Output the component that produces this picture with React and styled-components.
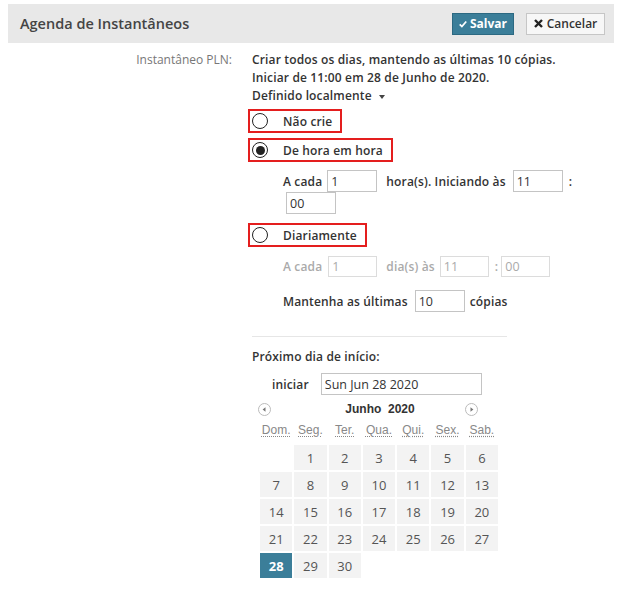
import React from 'react';
import styled, {createGlobalStyle, css} from 'styled-components';

const GlobalStyle = createGlobalStyle`
  body {
    margin: 0;
    background: #fff;
    font-family: "Open Sans", "Liberation Sans", sans-serif;
    color: #333;
  }
`;

const weeks = [
  [null, 1, 2, 3, 4, 5, 6],
  [7, 8, 9, 10, 11, 12, 13],
  [14, 15, 16, 17, 18, 19, 20],
  [21, 22, 23, 24, 25, 26, 27],
  [28, 29, 30, null, null, null, null],
];
const dayNames = ['Dom.', 'Seg.', 'Ter.', 'Qua.', 'Qui.', 'Sex.', 'Sab.'];

const Radio = ({checked, children}) => (
  <RadioBox>
    <RadioCircle $checked={checked} />
    <RadioText>{children}</RadioText>
  </RadioBox>
);

const App = () => {
  return (
    <Page>
      <GlobalStyle />
      <Header>
        <Title>Agenda de Instantâneos</Title>
        <Actions>
          <PrimaryButton>
            <svg width="11" height="10" viewBox="0 0 11 10">
              <path d="M1 5.5 L4 8.5 L10 1.5" stroke="#fff" strokeWidth="2.4" fill="none" />
            </svg>
            Salvar
          </PrimaryButton>
          <SecondaryButton>
            <svg width="9" height="9" viewBox="0 0 9 9">
              <path d="M1 1 L8 8 M8 1 L1 8" stroke="#222" strokeWidth="2.4" />
            </svg>
            Cancelar
          </SecondaryButton>
        </Actions>
      </Header>

      <Form>
        <FieldLabel>Instantâneo PLN:</FieldLabel>
        <FieldBody>
          <Summary>
            Criar todos os dias, mantendo as últimas 10 cópias.
            <br />
            Iniciar de 11:00 em 28 de Junho de 2020.
          </Summary>
          <Dropdown>
            Definido localmente <Caret />
          </Dropdown>

          <Radio>Não crie</Radio>
          <Gap $h={5} />
          <Radio checked>De hora em hora</Radio>

          <SubRow $top={8}>
            <SubText>A cada</SubText>
            <TextInput $w={50} $ml={5} defaultValue="1" />
            <SubText $ml={9}>hora(s). Iniciando às</SubText>
            <TextInput $w={50} $ml={7} defaultValue="11" />
            <SubText $ml={6}>:</SubText>
          </SubRow>
          <SubRow $top={0}>
            <TextInput $w={50} $ml={3} defaultValue="00" />
          </SubRow>

          <Gap $h={9} />
          <Radio>Diariamente</Radio>

          <SubRow $top={9}>
            <SubText $disabled>A cada</SubText>
            <TextInput $w={49} $ml={6} disabled defaultValue="1" />
            <SubText $ml={9} $disabled>dia(s) às</SubText>
            <TextInput $w={49} $ml={5} disabled defaultValue="11" />
            <SubText $ml={6} $disabled>:</SubText>
            <TextInput $w={49} $ml={3} disabled defaultValue="00" />
          </SubRow>

          <SubRow $top={13}>
            <SubText>Mantenha as últimas</SubText>
            <TextInput $w={50} $ml={7} defaultValue="10" />
            <SubText $ml={5}>cópias</SubText>
          </SubRow>

          <Divider />

          <SectionTitle>Próximo dia de início:</SectionTitle>
          <StartRow>
            <SubText>iniciar</SubText>
            <TextInput $w={161} $ml={12} defaultValue="Sun Jun 28 2020" />
          </StartRow>

          <Calendar>
            <CalNav>
              <NavArrow $dir="prev">
                <svg width="13" height="13" viewBox="0 0 13 13">
                  <circle cx="6.5" cy="6.5" r="6" fill="none" stroke="#bbb" />
                  <path d="M7.5 4.2 L4.6 6.5 L7.5 8.8 Z" fill="#777" />
                </svg>
              </NavArrow>
              <MonthTitle>Junho&nbsp;&nbsp;2020</MonthTitle>
              <NavArrow $dir="next">
                <svg width="13" height="13" viewBox="0 0 13 13">
                  <circle cx="6.5" cy="6.5" r="6" fill="none" stroke="#bbb" />
                  <path d="M5.5 4.2 L8.4 6.5 L5.5 8.8 Z" fill="#777" />
                </svg>
              </NavArrow>
            </CalNav>
            <DayNames>
              {dayNames.map((d) => (
                <DayName key={d}>
                  <abbr>{d}</abbr>
                </DayName>
              ))}
            </DayNames>
            <DayGrid>
              {weeks.flat().map((d, i) =>
                d ? (
                  <DayCell key={i} $selected={d === 28}>
                    {d}
                  </DayCell>
                ) : (
                  <EmptyCell key={i} />
                )
              )}
            </DayGrid>
          </Calendar>
        </FieldBody>
      </Form>
    </Page>
  );
};

const boldText = css`
  font-size: 12px;
  font-weight: 600;
  letter-spacing: 0.15px;
  color: #333;
`;

const Page = styled.div`
  padding: 4px 12px 0 8px;
`;

const Header = styled.div`
  height: 39px;
  background: #e8e8e8;
  display: flex;
  align-items: center;
  justify-content: space-between;
  padding: 0 9px 0 12px;
`;

const Title = styled.div`
  font-size: 14.5px;
  font-weight: 600;
  color: #444;
`;

const Actions = styled.div`
  display: flex;
  gap: 12px;
`;

const buttonBase = css`
  height: 22px;
  box-sizing: border-box;
  display: flex;
  align-items: center;
  justify-content: center;
  gap: 3px;
  padding: 0 6px;
  font-family: "Open Sans", sans-serif;
  font-size: 12px;
  cursor: pointer;
`;

const PrimaryButton = styled.button`
  ${buttonBase};
  width: 62px;
  background: #3b7e99;
  border: 1px solid #2c6982;
  color: #fff;
  font-weight: 700;
`;

const SecondaryButton = styled.button`
  ${buttonBase};
  width: 79px;
  gap: 4px;
  background: #f7f7f7;
  border: 1px solid #c6c6c6;
  color: #333;
  font-weight: 600;
`;

const Form = styled.div`
  display: grid;
  grid-template-columns: 224px 1fr;
  column-gap: 20px;
  margin-top: 8px;
`;

const FieldLabel = styled.div`
  text-align: right;
  font-size: 12px;
  line-height: 18px;
  color: #777;
`;

const FieldBody = styled.div`
  display: flex;
  flex-direction: column;
  align-items: flex-start;
`;

const Summary = styled.div`
  ${boldText};
  line-height: 18px;
`;

const Dropdown = styled.div`
  ${boldText};
  line-height: 18px;
  display: flex;
  align-items: center;
  gap: 7px;
`;

const Caret = styled.span`
  width: 0;
  height: 0;
  border-left: 3.5px solid transparent;
  border-right: 3.5px solid transparent;
  border-top: 4px solid #444;
  margin-top: 1px;
`;

const Gap = styled.div`
  height: ${(p) => p.$h}px;
`;

const RadioBox = styled.div`
  margin: 4px 0 0 -4px;
  height: 24px;
  box-sizing: border-box;
  border: 2px solid #e41e1e;
  display: flex;
  align-items: center;
  gap: 15px;
  padding: 0 8px 0 2px;
  ${Gap} + & {
    margin-top: 0;
  }
`;

const RadioCircle = styled.span`
  width: 16px;
  height: 16px;
  box-sizing: border-box;
  border-radius: 50%;
  border: 1.5px solid #222;
  display: flex;
  align-items: center;
  justify-content: center;
  &::after {
    content: '';
    width: 9px;
    height: 9px;
    border-radius: 50%;
    background: #222;
    display: ${(p) => (p.$checked ? 'block' : 'none')};
  }
`;

const RadioText = styled.span`
  ${boldText};
`;

const SubRow = styled.div`
  display: flex;
  align-items: center;
  margin-top: ${(p) => p.$top}px;
  padding-left: 31px;
`;

const SubText = styled.span`
  ${boldText};
  color: ${(p) => (p.$disabled ? '#aaa' : '#333')};
  margin-left: ${(p) => p.$ml || 0}px;
  white-space: nowrap;
`;

const TextInput = styled.input`
  width: ${(p) => p.$w}px;
  height: 22px;
  box-sizing: border-box;
  margin: 0 0 0 ${(p) => p.$ml || 0}px;
  padding: 0 3px;
  border: 1px solid #c4c4c4;
  font-family: "Open Sans", sans-serif;
  font-size: 12.5px;
  color: #333;
  background: #fff;
  outline: none;
  &:disabled {
    height: 21px;
    border-color: #dcdcdc;
    color: #aaa;
  }
`;

const Divider = styled.div`
  width: 255px;
  height: 1px;
  background: #e6e6e6;
  margin-top: 24px;
`;

const SectionTitle = styled.div`
  ${boldText};
  margin-top: 11px;
  line-height: 18px;
`;

const StartRow = styled.div`
  display: flex;
  align-items: center;
  margin-top: 7px;
  padding-left: 20px;
`;

const Calendar = styled.div`
  width: 238px;
  margin: 4px 0 0 8px;
`;

const CalNav = styled.div`
  display: grid;
  grid-template-columns: 1fr auto 1fr;
  align-items: center;
  height: 20px;
`;

const NavArrow = styled.span`
  display: flex;
  justify-self: ${(p) => (p.$dir === 'prev' ? 'start' : 'end')};
  margin: ${(p) => (p.$dir === 'prev' ? '0 0 0 -2px' : '0 20px 0 0')};
`;

const MonthTitle = styled.div`
  font-family: "Liberation Sans", Arial, sans-serif;
  font-size: 12px;
  font-weight: 700;
  color: #333;
  padding-left: 2px;
`;

const DayNames = styled.div`
  display: grid;
  grid-template-columns: repeat(7, 1fr);
  gap: 2px;
  height: 18px;
  align-items: center;
  margin-top: 2px;
`;

const DayName = styled.div`
  text-align: center;
  font-family: "Liberation Sans", Arial, sans-serif;
  font-size: 12px;
  color: #888;
  abbr {
    text-decoration: underline dotted;
    text-underline-offset: 2px;
  }
`;

const DayGrid = styled.div`
  display: grid;
  grid-template-columns: repeat(7, 1fr);
  grid-auto-rows: 25px;
  gap: 2px;
  margin-top: 6px;
`;

const DayCell = styled.div`
  display: flex;
  align-items: center;
  justify-content: center;
  font-size: 13px;
  background: ${(p) => (p.$selected ? '#3b7e99' : '#f3f3f3')};
  color: ${(p) => (p.$selected ? '#fff' : '#555')};
  font-weight: ${(p) => (p.$selected ? 700 : 400)};
`;

const EmptyCell = styled.div``;

export default App;
